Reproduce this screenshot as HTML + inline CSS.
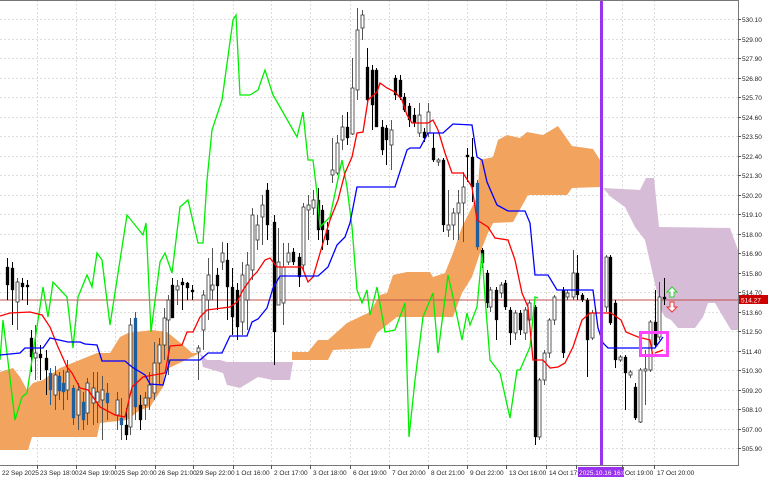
<!DOCTYPE html>
<html><head><meta charset="utf-8"><style>
html,body{margin:0;padding:0;background:#fff;width:768px;height:480px;overflow:hidden}
svg{display:block}
text{font-family:"Liberation Sans",sans-serif;font-size:6.5px;fill:#222}
</style></head><body>
<svg id="s" width="768" height="480" viewBox="0 0 768 480">
<rect width="768" height="480" fill="#fff"/>
<g id="grid" stroke="#dcdcdc" stroke-width="1" stroke-dasharray="2,2"></g>
<polygon fill="#f2a35e" points="0,372 13,368 20,377 27,390 33,383 43,380 60,368 97,353 110,353 120,337 128,333 152,330 167,332 183,345 192,353 200,353 165,370 163,387 150,407 140,410 127,420 100,423 97,437 32,437 28,450 0,450"/>
<polygon fill="#d6bcd6" points="200,353 207,360 220,360 227,362 293,362 290,380 273,380 258,377 253,380 240,388 227,385 223,373 203,367"/>
<polygon fill="#f2a35e" points="292,352 308,352 318,340 328,340 347,323 370,312 380,295 387,293 393,275 407,272 430,272 433,277 445,273 453,253 462,227 472,207 477,197 480,160 493,157 498,140 507,135 520,138 527,132 543,135 558,126 572,146 593,149 600,160 600,187 572,188 567,195 528,195 518,213 513,222 493,223 488,233 480,253 472,277 462,293 453,317 397,317 377,333 370,348 333,350 328,360 292,360"/>
<polygon fill="#d6bcd6" points="603,188 640,190 646,178 654,178 659,227 730,228 738,250 738,330 731,330 725,320 715,303 708,303 703,317 695,328 678,328 671,320 665,317 661,310 645,240 635,227 625,207 611,197"/>
<line x1="0" y1="300" x2="738" y2="300" stroke="#c0504d" stroke-width="1"/>
<g id="candles"></g>
<polyline fill="none" stroke="#00ee00" stroke-width="1.3" points="0,360 3,320 15,420 22,397 27,393 43,287 48,317 53,282 67,297 73,348 78,297 87,275 92,287 97,253 102,260 110,325 127,215 143,235 146,223 151,332 160,262 165,253 172,273 180,207 188,200 198,243 203,243 207,180 212,130 222,100 233,20 236,15 240,95 250,95 258,90 265,70 273,95 280,107 297,137 303,112 308,160 313,160 317,193 320,227 330,217 342,160 347,187 352,227 357,290 362,303 367,290 370,315 377,287 385,332 395,330 405,303 409,437 415,380 423,317 433,293 438,353 448,275 453,297 462,340 467,313 470,325 477,307 482,253 485,297 490,360 500,373 510,418 517,370 520,370 530,347 535,297 538,298"/>
<polyline fill="none" stroke="#ff0000" stroke-width="1.3" points="0,316 10,313 30,312 42,315 50,327 58,347 67,367 72,373 80,388 88,390 100,407 115,415 125,417 132,387 143,377 165,373 170,346 182,345 187,332 193,332 200,317 207,310 230,307 237,302 243,290 252,277 257,272 265,260 270,258 277,267 302,267 308,282 313,277 323,243 330,220 338,200 345,173 352,157 357,133 363,132 368,100 377,92 380,83 387,88 395,92 402,100 407,115 412,123 428,123 433,120 438,130 445,153 452,173 463,173 472,187 477,220 488,227 495,238 508,240 515,260 522,293 528,307 533,360 543,360 550,368 558,367 565,363 573,347 582,320 590,313 611,313 621,320 626,332 638,337 650,340 653,357"/>
<polyline fill="none" stroke="#ff0000" stroke-width="1.3" points="655,353 663,350"/>
<polyline fill="none" stroke="#0000ff" stroke-width="1.3" points="0,355 20,353 25,348 43,348 50,338 68,342 80,342 85,344 97,345 102,361 125,361 132,367 145,375 150,384 163,385 170,360 200,360 208,353 222,353 230,336 247,336 252,322 258,319 267,308 273,288 280,276 318,276 328,267 337,245 345,237 350,223 357,187 395,187 407,150 410,148 420,148 428,133 443,133 453,124 472,125 477,157 482,160 487,182 497,205 508,211 525,211 530,223 535,275 548,275 557,290 593,290 598,328 603,343 608,348 655,348 663,337"/>
<rect x="600" y="0" width="3" height="466" fill="#9933ee"/>
<rect x="640.5" y="332.5" width="27" height="23" fill="none" stroke="#ff44ff" stroke-width="3"/>
<path d="M670,297 h4 v-5 h3 l-5,-5 l-5,5 h3 z" fill="#fff" stroke="#33cc33" stroke-width="1"/>
<path d="M670,302 h4 v5 h3 l-5,5 l-5,-5 h3 z" fill="#fff" stroke="#ee3333" stroke-width="1"/>
<rect x="0" y="0" width="738" height="1" fill="#777"/>
<rect x="738" y="0" width="1" height="466" fill="#777"/>
<rect x="0" y="465" width="739" height="1" fill="#777"/>
<rect x="578" y="467" width="46" height="10" fill="#9933ee"/>
<g id="axis"></g>
<rect x="739" y="295" width="29" height="9" fill="#cc0000"/>
<text x="741" y="302.5" style="fill:#fff">514.27</text>
</svg>
<script>
var NS="http://www.w3.org/2000/svg";
function el(p,t,a){var e=document.createElementNS(NS,t);for(var k in a)e.setAttribute(k,a[k]);p.appendChild(e);return e;}
var g=document.getElementById('grid'),ax=document.getElementById('axis');
var prices=["530.10","529.00","527.90","526.80","525.70","524.60","523.50","522.40","521.30","520.20","519.10","518.00","516.90","515.80","514.70","513.60","512.50","511.40","510.30","509.20","508.10","507.00","505.90"];
for(var i=0;i<prices.length;i++){var y=Math.round(19+i*19.5)+0.5;el(g,'line',{x1:0,y1:y,x2:738,y2:y});el(ax,'line',{x1:738,y1:y,x2:741,y2:y,stroke:'#555'});var t=el(ax,'text',{x:742,y:y+2.5});t.textContent=prices[i];}
var dl=[[2,"22 Sep 2025"],[40,"23 Sep 18:00"],[79,"24 Sep 19:00"],[118,"25 Sep 20:00"],[158,"26 Sep 21:00"],[196,"29 Sep 22:00"],[236,"1 Oct 16:00"],[274,"2 Oct 17:00"],[313,"3 Oct 18:00"],[353,"6 Oct 19:00"],[392,"7 Oct 20:00"],[431,"8 Oct 21:00"],[470,"9 Oct 22:00"],[509,"13 Oct 16:00"],[549,"14 Oct 17:00"],[579,"2025.10.16 16:00"],[625,"Oct 19:00"],[657,"17 Oct 20:00"]];
for(var i=0;i<dl.length;i++){var x=dl[i][0];if(i>0){var gx=x-2.5;el(g,'line',{x1:gx,y1:0,x2:gx,y2:465});}el(ax,'line',{x1:x-2.5,y1:465,x2:x-2.5,y2:469,stroke:'#555'});var t=el(ax,'text',{x:x,y:475});t.textContent=dl[i][1];if(dl[i][0]==579)t.setAttribute('style','fill:#fff');}
var C=[[7,258,300,267,285,'b'],[12,262,325,268,290,'b'],[17,278,330,282,302,'w'],[22,278,300,283,287,'b'],[27,280,305,285,287,'b'],[31,330,372,338,357,'b'],[35,325,380,353,358,'w'],[40,345,380,354,358,'b'],[46,350,395,358,370,'b'],[50,368,405,373,390,'u'],[55,366,410,375,395,'w'],[59,372,400,376,391,'u'],[63,370,410,383,392,'u'],[67,360,400,372,390,'w'],[73,385,425,388,418,'u'],[78,383,430,390,415,'w'],[83,392,430,402,420,'u'],[87,378,425,383,413,'w'],[93,372,425,388,403,'w'],[97,372,423,392,402,'w'],[102,376,440,390,400,'w'],[107,383,420,393,403,'u'],[117,392,430,400,415,'w'],[121,398,440,418,425,'u'],[126,408,440,425,435,'b'],[130,318,435,325,427,'w'],[135,312,420,318,407,'u'],[140,395,430,405,420,'b'],[145,392,420,398,405,'w'],[149,372,410,385,398,'w'],[154,342,400,363,393,'w'],[159,338,385,345,363,'w'],[164,308,360,318,345,'w'],[168,295,375,300,320,'w'],[172,278,318,285,318,'b'],[177,280,305,286,290,'w'],[182,278,310,282,285,'b'],[187,282,300,283,288,'b'],[192,285,300,290,292,'b'],[198,345,380,348,352,'w'],[203,290,350,295,330,'w'],[208,258,320,275,300,'w'],[212,248,300,285,290,'w'],[217,268,310,275,286,'b'],[222,242,270,253,262,'w'],[227,243,320,260,287,'b'],[232,268,335,287,317,'b'],[237,283,340,290,327,'b'],[242,262,335,275,322,'w'],[247,252,330,265,300,'w'],[252,208,280,215,270,'w'],[257,215,250,225,240,'w'],[262,195,245,205,217,'w'],[267,183,240,190,225,'b'],[274,215,365,222,332,'b'],[278,228,305,262,305,'w'],[283,243,325,267,303,'w'],[288,243,265,253,262,'w'],[293,248,265,252,262,'b'],[299,253,287,257,277,'b'],[303,203,270,207,265,'w'],[308,195,240,205,210,'w'],[313,190,215,200,208,'w'],[318,188,240,200,230,'b'],[322,205,250,210,230,'b'],[327,222,245,230,240,'b'],[332,138,183,170,175,'w'],[337,135,175,143,173,'w'],[342,115,150,127,140,'w'],[347,112,145,127,138,'b'],[352,58,135,88,134,'w'],[357,8,100,30,90,'w'],[362,10,40,15,28,'w'],[367,48,103,67,100,'b'],[372,65,130,70,105,'b'],[376,68,127,70,127,'b'],[382,120,155,127,150,'b'],[386,125,165,128,140,'b'],[391,120,170,130,145,'w'],[395,75,100,78,95,'b'],[400,75,100,80,97,'b'],[404,93,112,97,110,'b'],[409,103,127,106,120,'b'],[414,108,127,115,123,'b'],[419,103,137,115,133,'w'],[424,128,142,132,138,'b'],[428,103,137,112,133,'w'],[433,133,162,148,160,'b'],[438,158,166,160,162,'w'],[443,158,232,160,225,'b'],[448,190,237,225,230,'w'],[453,208,240,213,225,'w'],[458,190,240,203,213,'w'],[463,172,242,187,203,'w'],[467,148,182,155,157,'b'],[472,138,202,157,187,'b'],[477,180,250,183,247,'u'],[482,248,268,250,263,'b'],[487,270,308,273,303,'b'],[490,287,312,290,307,'w'],[496,287,340,290,320,'b'],[501,282,298,285,293,'w'],[505,280,310,283,307,'b'],[510,307,345,310,333,'b'],[515,310,340,313,333,'w'],[520,310,335,313,330,'b'],[525,307,340,310,333,'w'],[529,300,325,303,320,'w'],[535,305,445,307,437,'b'],[539,378,440,380,437,'w'],[544,350,385,353,380,'w'],[549,318,358,320,353,'w'],[554,295,325,297,320,'w'],[563,287,358,290,353,'b'],[567,290,300,293,297,'w'],[573,250,300,273,297,'w'],[577,255,300,273,295,'b'],[582,293,302,295,300,'b'],[587,298,377,300,340,'b'],[592,310,340,313,338,'w'],[606,255,312,257,307,'w'],[610,255,325,257,323,'b'],[615,300,368,303,360,'b'],[620,355,362,357,360,'w'],[625,355,410,357,373,'b'],[630,370,378,372,375,'w'],[635,383,420,387,418,'b'],[640,368,423,370,422,'w'],[645,350,405,369,371,'w'],[650,320,372,322,370,'w'],[655,290,348,322,345,'b'],[659,282,340,297,337,'w'],[664,278,305,297,299,'b']];
var cg=document.getElementById('candles');
C.forEach(function(c){var x=c[0],col=c[5]=='u'?'#1f5f9f':'#000';el(cg,'line',{x1:x+0.5,y1:c[1],x2:x+0.5,y2:c[2],stroke:c[5]=='w'?'#555':col,'stroke-width':1});var h=Math.max(1,c[4]-c[3]);el(cg,'rect',{x:x-1,y:c[3],width:3,height:h,fill:c[5]=='w'?'#fff':col,stroke:c[5]=='w'?'#333':col,'stroke-width':c[5]=='w'?0.8:0.3});});
</script>
</body></html>
